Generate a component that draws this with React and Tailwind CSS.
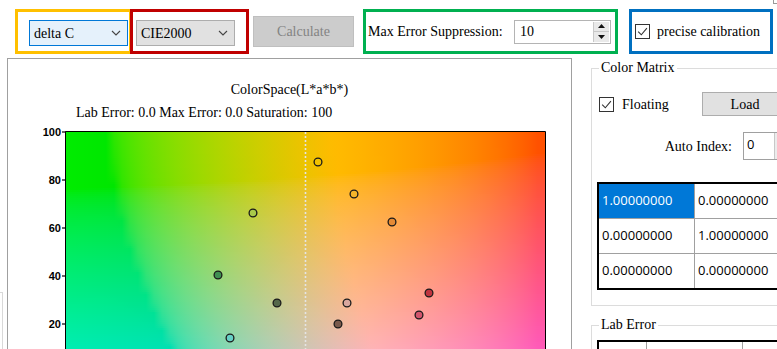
import { useMemo } from 'react';

// Lab -> sRGB, clipped channel by channel (same as the chart's colour field)
function labToRgb(L, a, b) {
  const fy = (L + 16) / 116;
  const fx = fy + a / 500;
  const fz = fy - b / 200;
  const f = (t) => (t > 0.206893 ? t * t * t : (t - 16 / 116) / 7.787);
  const X = 0.95047 * f(fx);
  const Y = f(fy);
  const Z = 1.08883 * f(fz);
  const lin = [
    3.2406 * X - 1.5372 * Y - 0.4986 * Z,
    -0.9689 * X + 1.8758 * Y + 0.0415 * Z,
    0.0557 * X - 0.204 * Y + 1.057 * Z,
  ];
  return lin.map((c) => {
    const v = c <= 0.0031308 ? 12.92 * c : 1.055 * Math.pow(Math.max(c, 0), 1 / 2.4) - 0.055;
    return Math.round(Math.min(1, Math.max(0, v)) * 255);
  });
}

const PX0 = 58;
const PW = 479;
const PY0 = 10;
const PH = 240;

const points = [
  [310, 40, '#f2c200'],
  [346, 72, '#f5b52a'],
  [384, 100, '#e58a35'],
  [245, 91, '#a9c94a'],
  [210, 153, '#3f8f52'],
  [269, 181, '#55684a'],
  [339, 181, '#d9a79e'],
  [330, 202, '#7a5a4c'],
  [421, 171, '#c0343f'],
  [411, 193, '#d2566d'],
  [222, 216, '#66cfc6'],
];

function Chevron() {
  return (
    <svg width="10" height="6" viewBox="0 0 10 6" className="shrink-0">
      <path d="M1 1l4 4 4-4" fill="none" stroke="#444" strokeWidth="1.1" />
    </svg>
  );
}

function Check() {
  return (
    <div className="w-[15px] h-[15px] border border-[#333] bg-white shrink-0">
      <svg width="13" height="13" viewBox="0 0 13 13">
        <path d="M2.2 6.6l3.1 3.2 5.6-6.6" fill="none" stroke="#333" strokeWidth="1.1" />
      </svg>
    </div>
  );
}

function Spinner() {
  return (
    <div className="w-[16px] h-full flex flex-col border-l border-[#c8c8c8] bg-[#e9e9e9]">
      <div className="flex-1 flex items-center justify-center border-b border-[#c8c8c8]">
        <svg width="7" height="4" viewBox="0 0 7 4"><path d="M0 4h7L3.5 0z" fill="#111" /></svg>
      </div>
      <div className="flex-1 flex items-center justify-center">
        <svg width="7" height="4" viewBox="0 0 7 4"><path d="M0 0h7L3.5 4z" fill="#111" /></svg>
      </div>
    </div>
  );
}

function LabPlot() {
  const rows = useMemo(() => {
    const out = [];
    for (let y = PY0; y < 242; y += 2) {
      const b = (PY0 + PH - (y + 1)) / 2.4;
      const stops = [];
      for (let x = 0; x <= PW; x += 8) {
        const a = (x / PW) * 200 - 100;
        const [r, g, bl] = labToRgb(80, a, b);
        stops.push({ o: x / PW, c: `rgb(${r},${g},${bl})` });
      }
      out.push({ y, stops });
    }
    return out;
  }, []);

  const ticks = [100, 80, 60, 40, 20];

  return (
    <svg width="563" height="240" viewBox="0 0 563 240" className="block">
      <defs>
        {rows.map((r) => (
          <linearGradient key={r.y} id={`row${r.y}`} gradientUnits="userSpaceOnUse" x1={PX0} x2={PX0 + PW} y1="0" y2="0">
            {r.stops.map((s, i) => (
              <stop key={i} offset={s.o} stopColor={s.c} />
            ))}
          </linearGradient>
        ))}
      </defs>
      {rows.map((r) => (
        <rect key={r.y} x={PX0} y={r.y} width={PW} height="2.3" fill={`url(#row${r.y})`} />
      ))}
      <line x1="297.5" x2="297.5" y1={PY0} y2="240" stroke="#e4e4e4" strokeWidth="1.6" strokeDasharray="2 2" />
      <line x1={PX0 - 0.5} x2={PX0 + PW + 0.5} y1={PY0 - 0.5} y2={PY0 - 0.5} stroke="#000" />
      <line x1={PX0 - 0.5} x2={PX0 - 0.5} y1={PY0 - 0.5} y2="240" stroke="#000" />
      <line x1={PX0 + PW + 0.5} x2={PX0 + PW + 0.5} y1={PY0 - 0.5} y2="240" stroke="#000" />
      {ticks.map((t) => {
        const y = PY0 + (100 - t) * 2.4;
        return (
          <g key={t}>
            <line x1="54" x2="58" y1={y} y2={y} stroke="#000" strokeWidth="1.2" />
            <text x="53" y={y + 4} textAnchor="end" fontFamily="Liberation Sans, Arial, sans-serif" fontWeight="700" fontSize="11" fill="#000">
              {t}
            </text>
          </g>
        );
      })}
      {points.map(([x, y, c], i) => (
        <circle key={i} cx={x} cy={y} r="3.9" fill={c} stroke="#1a1a1a" strokeWidth="1.3" />
      ))}
    </svg>
  );
}

export default function App() {
  const matrix = [
    ['1.00000000', '0.00000000'],
    ['0.00000000', '1.00000000'],
    ['0.00000000', '0.00000000'],
  ];

  return (
    <div className="relative w-[777px] h-[349px] overflow-hidden bg-white font-['Liberation_Serif',serif] text-[14px] text-black">
      {/* toolbar */}
      <div className="flex items-start h-[58px] pl-[15px] pt-[9px]">
        <div className="w-[117px] h-[45px] border-[3px] border-[#ffc000] pl-[11px] pt-[8px]">
          <div className="w-[99px] h-[26px] bg-[#e5f1fb] border border-[#0078d7] flex items-center justify-between pl-[4px] pr-[6px]">
            <span>delta C</span>
            <Chevron />
          </div>
        </div>
        <div className="relative -ml-[2px] w-[119px] h-[45px] border-[3px] border-[#c00000] pl-[3px] pt-[8px]">
          <div className="w-[99px] h-[26px] bg-[#e1e1e1] border border-[#adadad] flex items-center justify-between pl-[4px] pr-[6px]">
            <span>CIE2000</span>
            <Chevron />
          </div>
        </div>
        <button className="ml-[4px] mt-[7px] w-[101px] h-[31px] bg-[#cccccc] border border-[#bfbfbf] text-[#838383]">
          Calculate
        </button>
        <div className="ml-[9px] w-[255px] h-[45px] border-[3px] border-[#00b050] flex items-center justify-between pl-[2px] pr-[4px]">
          <span>Max Error Suppression:</span>
          <div className="w-[97px] h-[24px] border border-[#b4b4b4] bg-white flex items-stretch p-[1px]">
            <span className="flex-1 pl-[4px] leading-[20px]">10</span>
            <Spinner />
          </div>
        </div>
        <div className="ml-[11px] w-[144px] h-[45px] border-[3px] border-[#0070c0] flex items-center pl-[3px] gap-[7px]">
          <Check />
          <span>precise calibration</span>
        </div>
      </div>

      {/* body */}
      <div className="flex items-start">
        <div className="ml-[7px] w-[565px] h-[300px] shrink-0 border border-[#a0a0a0] bg-white">
          <div className="mt-[23px] text-center leading-[16px]">ColorSpace(L*a*b*)</div>
          <div className="mt-[7px] pl-[68px] leading-[16px]">Lab Error: 0.0 Max Error: 0.0 Saturation: 100</div>
          <div className="mt-[1px]">
            <LabPlot />
          </div>
        </div>

        <div className="ml-[19px] mt-[2px] w-[200px] shrink-0">
          <fieldset className="w-[200px] h-[246px] border border-[#dcdcdc]">
            <legend className="ml-[7px] px-[2px] leading-[16px]">Color Matrix</legend>
            <div className="mt-[16px] h-[24px] flex items-center">
              <div className="w-[110px] shrink-0 pl-[7px] flex items-center gap-[8px]">
                <Check />
                <span>Floating</span>
              </div>
              <button className="w-[86px] h-[24px] shrink-0 bg-[#e1e1e1] border border-[#adadad]">Load</button>
            </div>
            <div className="mt-[16px] h-[28px] flex items-center">
              <div className="w-[151px] shrink-0 text-right pr-[11px]">Auto Index:</div>
              <div className="w-[40px] h-[28px] shrink-0 border border-[#a0a0a0] flex items-start">
                <span className="flex-1 pl-[3px] pt-[2px] font-['Open_Sans',sans-serif] text-[13px] leading-[18px]">0</span>
                <div className="w-[8px] h-full border-l border-[#c8c8c8] bg-[#ececec]" />
              </div>
            </div>
            <div className="mt-[22px] ml-[5px] w-[194px] border-y-2 border-l-2 border-black font-['Open_Sans',sans-serif] text-[13px]">
              {matrix.map((row, i) => (
                <div key={i} className={`flex ${i < 2 ? 'h-[35px] border-b border-[#a0a0a0]' : 'h-[34px]'}`}>
                  {row.map((v, j) => (
                    <div
                      key={j}
                      className={`w-[96px] shrink-0 flex items-center pl-[3px] ${j === 0 ? 'border-r border-[#a0a0a0]' : ''} ${
                        i === 0 && j === 0 ? 'bg-[#0078d7] text-white' : ''
                      }`}
                    >
                      {v}
                    </div>
                  ))}
                </div>
              ))}
            </div>
          </fieldset>

          <fieldset className="w-[200px] mt-[11px] h-[60px] border border-[#dcdcdc]">
            <legend className="ml-[7px] px-[2px] leading-[16px]">Lab Error</legend>
            <div className="mt-[7px] ml-[5px] w-[194px] h-[40px] border-y-2 border-l-2 border-black flex">
              <div className="w-[48px] border-r border-[#a0a0a0]" />
              <div className="w-[96px] border-r border-[#a0a0a0]" />
            </div>
          </fieldset>
        </div>
      </div>

      {/* partly hidden panels at the edges */}
      <div className="absolute left-0 top-[292px] w-[3px] h-[60px] border-t border-r border-[#d9d9d9]" />
      <div className="absolute right-0 top-0 w-[4px] h-[4px] border-l border-b border-[#999]" />
    </div>
  );
}
